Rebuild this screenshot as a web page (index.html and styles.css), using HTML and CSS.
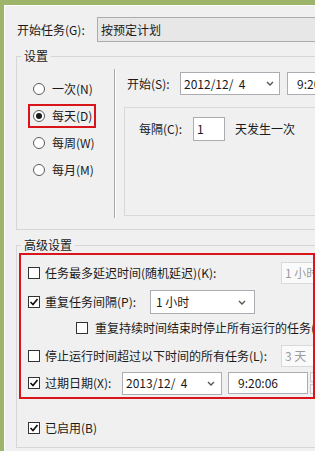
FILE: index.html
```html
<!DOCTYPE html>
<html lang="zh-CN">
<head>
<meta charset="utf-8">
<title>触发器</title>
<link rel="stylesheet" href="styles.css">
</head>
<body>
<div class="win">
  <div class="toprow">
    <span class="toplbl">开始任务(G):</span>
    <div class="select">按预定计划</div>
  </div>

  <fieldset class="group g1">
    <legend>设置</legend>
    <div class="g1body">
      <div class="radios">
        <div class="opt"><span class="radio"></span><span>一次(N)</span></div>
        <div class="opt sel"><span class="redbox"><span class="radio"><span class="dot"></span></span><span>每天(D)</span></span></div>
        <div class="opt"><span class="radio"></span><span>每周(W)</span></div>
        <div class="opt"><span class="radio"></span><span>每月(M)</span></div>
      </div>
      <div class="startcol">
        <div class="startrow">
          <span class="startlbl">开始(S):</span>
          <div class="field date"><span>2012/12/&nbsp;&nbsp;4</span><svg class="chev" width="8" height="5" viewBox="0 0 8 5"><path d="M1 1 L4 4 L7 1" fill="none" stroke="#555" stroke-width="1.4"/></svg></div>
          <div class="field time">9:20:06</div>
        </div>
        <div class="innerbox">
          <div class="everyrow">
            <span class="everylbl">每隔(C):</span>
            <div class="field num">1</div>
            <span class="daytxt">天发生一次</span>
          </div>
        </div>
      </div>
    </div>
  </fieldset>

  <fieldset class="group g2">
    <legend>高级设置</legend>
    <div class="g2body">
      <div class="redwrap">
        <div class="row r1">
          <span class="cb"></span><span class="txt">任务最多延迟时间(随机延迟)(K):</span>
          <div class="dis">1 小时</div>
        </div>
        <div class="row r2">
          <span class="cb"><svg width="10" height="10" viewBox="0 0 10 10"><path d="M1.5 5 L4 7.5 L8.5 2" fill="none" stroke="#111" stroke-width="1.7"/></svg></span><span class="txt lbl105">重复任务间隔(P):</span>
          <div class="field combo"><span>1 小时</span><svg class="chev" width="8" height="5" viewBox="0 0 8 5"><path d="M1 1 L4 4 L7 1" fill="none" stroke="#555" stroke-width="1.4"/></svg></div>
        </div>
        <div class="row r3">
          <span class="cb cb3"></span><span class="txt">重复持续时间结束时停止所有运行的任务(</span>
        </div>
        <div class="row r4">
          <span class="cb"></span><span class="txt">停止运行时间超过以下时间的所有任务(L):</span>
          <div class="dis">3 天</div>
        </div>
        <div class="row r5">
          <span class="cb"><svg width="10" height="10" viewBox="0 0 10 10"><path d="M1.5 5 L4 7.5 L8.5 2" fill="none" stroke="#111" stroke-width="1.7"/></svg></span><span class="txt lbl77">过期日期(X):</span>
          <div class="field date2"><span>2013/12/&nbsp;&nbsp;4</span><svg class="chev" width="8" height="5" viewBox="0 0 8 5"><path d="M1 1 L4 4 L7 1" fill="none" stroke="#555" stroke-width="1.4"/></svg></div>
          <div class="field time2">9:20:06</div>
          <div class="spin"><span></span><span></span></div>
        </div>
      </div>
      <div class="row enabled">
        <span class="cb"><svg width="10" height="10" viewBox="0 0 10 10"><path d="M1.5 5 L4 7.5 L8.5 2" fill="none" stroke="#111" stroke-width="1.7"/></svg></span><span class="txt">已启用(B)</span>
      </div>
    </div>
  </fieldset>
</div>
</body>
</html>
```

FILE: styles.css
```css
html, body {
  margin: 0;
  padding: 0;
  background: #f0f0f0;
  overflow: hidden;
}
body {
  font-family: "Noto Sans CJK SC", "Microsoft YaHei", sans-serif;
  font-size: 12px;
  line-height: 16px;
  color: #1a1a1a;
}
.win {
  width: 315px;
  height: 451px;
  box-sizing: border-box;
  border-top: 5px solid #9eb46b;
  border-left: 4px solid #9eb46b;
  box-shadow: inset 1px 1px 0 #fbfbfb;
  overflow: hidden;
  white-space: nowrap;
}
.toprow {
  display: flex;
  align-items: center;
  height: 25px;
  margin-top: 12px;
  padding-left: 13px;
}
.toplbl {
  width: 80px;
  flex: none;
}
.select {
  flex: none;
  width: 260px;
  height: 25px;
  box-sizing: border-box;
  border: 1px solid #acacac;
  background: #e7e7e7;
  padding-left: 3px;
  display: flex;
  align-items: center;
}
.group {
  margin: 0 0 0 12px;
  padding: 0;
  border: 1px solid #d6d6d6;
  width: 320px;
  min-width: 0;
  box-sizing: border-box;
}
.group legend {
  margin-left: 4px;
  padding: 0 3px;
  line-height: 14px;
}
.g1 { margin-top: 7px; }
.g2 { margin-top: 8px; }
.g1body {
  display: flex;
  align-items: flex-start;
  height: 166px;
}
.radios {
  flex: none;
  width: 98px;
  height: 149px;
  box-sizing: border-box;
  margin-top: 6px;
  padding-top: 6px;
  border-right: 1px solid #a8a8a8;
  box-shadow: 1px 0 0 #fff;
}
.opt {
  height: 27px;
  display: flex;
  align-items: center;
  padding-left: 16px;
}
.opt.sel { padding-left: 11px; }
.redbox {
  display: flex;
  align-items: center;
  height: 24px;
  box-sizing: border-box;
  border: 2px solid #d9141b;
  padding: 0 2px 0 3px;
}
.radio {
  flex: none;
  width: 12px;
  height: 12px;
  box-sizing: border-box;
  border: 1px solid #5c5c5c;
  border-radius: 50%;
  background: #fff;
  margin-right: 7px;
  display: flex;
  align-items: center;
  justify-content: center;
}
.dot {
  width: 6px;
  height: 6px;
  border-radius: 50%;
  background: #1a1a1a;
}
.startcol {
  flex: none;
  padding-top: 9px;
  padding-left: 9px;
}
.startrow {
  display: flex;
  align-items: center;
  height: 23px;
  padding-left: 3px;
}
.startlbl { width: 53px; flex: none; }
.field {
  flex: none;
  box-sizing: border-box;
  border: 1px solid #abadb3;
  background: #fff;
  display: flex;
  align-items: center;
}
.chev { flex: none; }
.date {
  width: 100px;
  height: 23px;
  padding: 0 5px 0 3px;
  justify-content: space-between;
}
.time {
  width: 60px;
  height: 23px;
  margin-left: 7px;
  padding-left: 9px;
}
.innerbox {
  margin-top: 12px;
  width: 250px;
  height: 109px;
  box-sizing: border-box;
  border: 1px solid #d9d9d9;
  padding: 9px 0 0 14px;
}
.everyrow {
  display: flex;
  align-items: center;
  height: 24px;
}
.everylbl { width: 54px; flex: none; }
.num {
  width: 32px;
  height: 24px;
  padding-left: 3px;
}
.daytxt { margin-left: 10px; }
.g2body {
  height: 194px;
  padding: 1px 0 0 2px;
}
.redwrap {
  width: 296px;
  box-sizing: border-box;
  border: 2px solid #d9141b;
  overflow: hidden;
  padding: 6px 0 2px 7px;
}
.row {
  display: flex;
  align-items: center;
  height: 24px;
}
.r2 { margin-top: 5px; }
.r3 { margin-top: 2px; }
.r4 { margin-top: 4px; }
.r5 { margin-top: 3px; }
.cb {
  flex: none;
  width: 12px;
  height: 12px;
  box-sizing: border-box;
  border: 1px solid #333;
  background: #fff;
  margin-right: 5px;
  display: flex;
  align-items: center;
  justify-content: center;
}
.cb svg { display: block; }
.cb3 { margin-left: 48px; margin-right: 7px; }
.txt { flex: none; }
.lbl105 { width: 105px; }
.lbl77 { width: 77px; }
.dis {
  flex: none;
  margin-left: auto;
  margin-right: -8px;
  width: 40px;
  height: 22px;
  box-sizing: border-box;
  border: 1px solid #d9d9d9;
  background: #fafafa;
  color: #9c9c9c;
  padding-left: 3px;
  display: flex;
  align-items: center;
  overflow: hidden;
}
.combo {
  width: 105px;
  height: 24px;
  padding: 0 8px 0 5px;
  justify-content: space-between;
}
.date2 {
  width: 100px;
  height: 23px;
  padding: 0 6px 0 3px;
  justify-content: space-between;
}
.time2 {
  width: 80px;
  height: 22px;
  margin-left: 6px;
  padding-left: 9px;
}
.spin {
  flex: none;
  margin-left: 2px;
  width: 10px;
  height: 22px;
  display: flex;
  flex-direction: column;
  justify-content: space-between;
}
.spin span {
  height: 10px;
  box-sizing: border-box;
  border: 1px solid #c8c8c8;
  background: #f4f4f4;
}
.enabled {
  margin-top: 17px;
  padding-left: 9px;
}
```
